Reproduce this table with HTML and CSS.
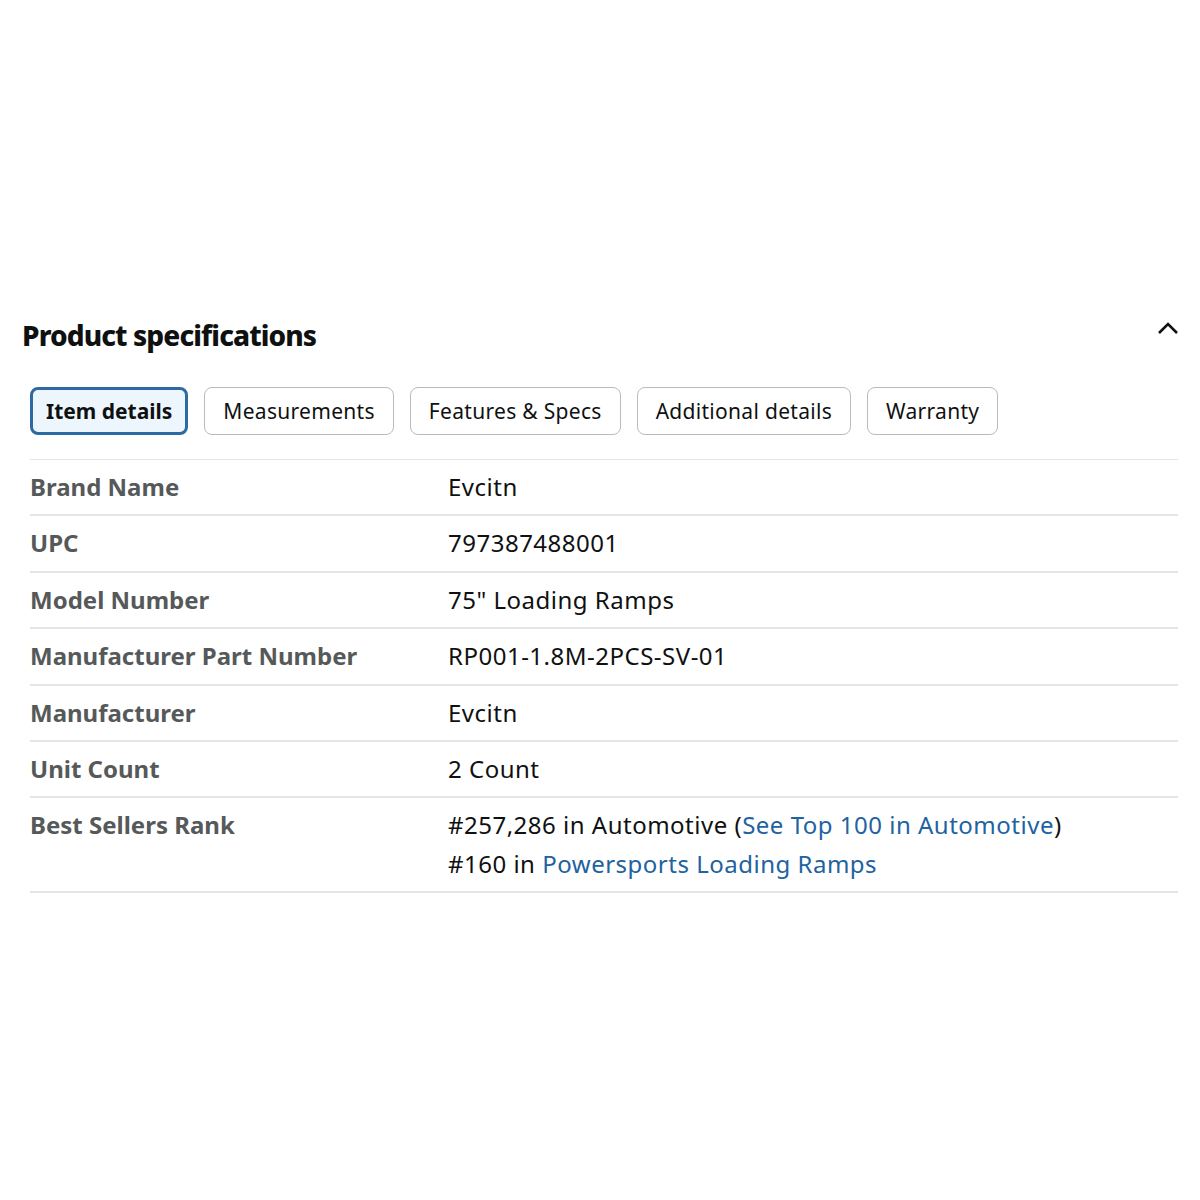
FILE: index.html
```html
<!DOCTYPE html>
<html lang="en">
<head>
<meta charset="UTF-8" />
<meta name="viewport" content="width=device-width, initial-scale=1" />
<title>Product specifications</title>
<link rel="stylesheet" href="styles.css">
</head>
<body>
  <section class="specs">
    <div class="specs-header">
      <h2>Product specifications</h2>
      <button class="collapse-btn" aria-label="Collapse">
        <svg width="22" height="14" viewBox="0 0 22 14"><path d="M2 12 L11 3 L20 12" fill="none" stroke="#0f1111" stroke-width="2.6"/></svg>
      </button>
    </div>

    <div class="tabs">
      <button class="tab active">Item details</button>
      <button class="tab">Measurements</button>
      <button class="tab">Features &amp; Specs</button>
      <button class="tab">Additional details</button>
      <button class="tab">Warranty</button>
    </div>

    <table class="spec-table">
      <tr><th>Brand Name</th><td>Evcitn</td></tr>
      <tr><th>UPC</th><td>797387488001</td></tr>
      <tr><th>Model Number</th><td>75" Loading Ramps</td></tr>
      <tr><th>Manufacturer Part Number</th><td>RP001-1.8M-2PCS-SV-01</td></tr>
      <tr><th>Manufacturer</th><td>Evcitn</td></tr>
      <tr><th>Unit Count</th><td>2 Count</td></tr>
      <tr>
        <th>Best Sellers Rank</th>
        <td>
          #257,286 in Automotive (<a href="#">See Top 100 in Automotive</a>)<br>
          #160 in <a href="#">Powersports Loading Ramps</a>
        </td>
      </tr>
    </table>
  </section>
</body>
</html>
```

FILE: styles.css
```css
:root {
  --text-color: #0f1111;
  --label-color: #565959;
  --link-color: #2162a1;
  --line-color: #e3e6e6;
  --font-family: "Noto Sans", "Open Sans", sans-serif;
}
* {
  box-sizing: border-box;
}
body {
  margin: 0;
  padding: 313px 22px 0 22px;
  background: #fff;
  font-family: var(--font-family);
  color: var(--text-color);
}

.specs-header {
  display: flex;
  justify-content: space-between;
  align-items: center;
}
.specs-header h2 {
  margin: 0;
  font-size: 28px;
  font-weight: 800;
  letter-spacing: -0.9px;
  line-height: 44px;
}
.collapse-btn {
  background: none;
  border: none;
  padding: 0;
  margin-right: -1px;
  margin-top: -12px;
  cursor: pointer;
}

.tabs {
  display: flex;
  gap: 16px;
  margin: 30px 0 0 8px;
}
.tab {
  font-family: var(--font-family);
  font-size: 21px;
  letter-spacing: 0.3px;
  color: var(--text-color);
  background: #fff;
  border: 1px solid #b8bcbc;
  border-radius: 8px;
  height: 48px;
  padding: 0 18px;
  cursor: pointer;
}
.tab.active {
  background: #edf6fd;
  border: 3px solid #2d6aa4;
  font-weight: 700;
  letter-spacing: 0;
  padding: 0 13px;
}

.spec-table {
  width: calc(100% - 8px);
  margin: 24px 0 0 8px;
  border-collapse: collapse;
  border-top: 1px solid var(--line-color);
}
.spec-table tr {
  border-bottom: 2px solid var(--line-color);
}
.spec-table th,
.spec-table td {
  text-align: left;
  vertical-align: top;
  font-size: 24px;
  line-height: 38.4px;
  padding: 8px 0;
}
.spec-table th {
  width: 418px;
  font-weight: 700;
  color: var(--label-color);
}
.spec-table td {
  color: var(--text-color);
  letter-spacing: 0.5px;
}
.spec-table a {
  color: var(--link-color);
  text-decoration: none;
}
```
